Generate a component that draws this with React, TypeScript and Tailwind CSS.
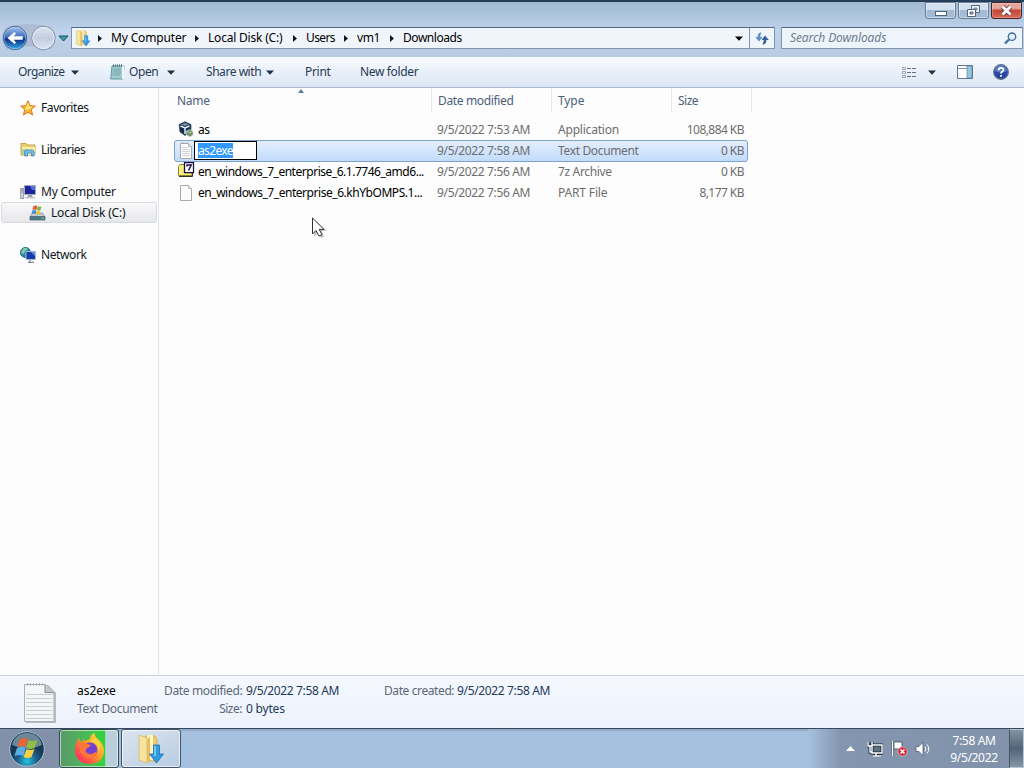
import React from "react";

const Down = ({ className = "text-[#1c2f45]" }: { className?: string }) => (
  <svg width="8" height="5" viewBox="0 0 8 5" className={"shrink-0 " + className}>
    <path d="M0 0.5H8L4 4.7Z" fill="currentColor" />
  </svg>
);

const FolderDownload = ({ width, height }: { width: number; height: number }) => (
  <svg width={width} height={height} viewBox="0 0 28 32" className="shrink-0">
    <path d="M8 3h10l2 3v22H8z" fill="#e8cb73" stroke="#cba548" strokeWidth=".7" />
    <path d="M10 2h6v25h-6z" fill="#fff3bf" />
    <path d="M2 2l8 3v25l-8-3z" fill="#f5e3a0" stroke="#d4b45f" strokeWidth=".7" />
    <path d="M10 6l3-2v24l-3 2z" fill="#e3bf62" />
    <path d="M16.500 12h6v9h4l-7 9-7-9h4z" fill="#2e9be2" stroke="#1d6fae" strokeWidth=".8" />
    <path d="M18 13v10" stroke="#8bd4fb" strokeWidth="1.500" />
  </svg>
);

const NavButtons = () => (
  <svg width="71" height="32" viewBox="0 0 71 32" className="shrink-0">
    <defs>
      <linearGradient id="back" x2="0" y2="1">
        <stop offset="0" stopColor="#a9c8ef" />
        <stop offset=".45" stopColor="#3f6fc0" />
        <stop offset=".55" stopColor="#0d2c85" />
        <stop offset="1" stopColor="#35b2ee" />
      </linearGradient>
      <linearGradient id="forward" x2="0" y2="1">
        <stop offset="0" stopColor="#dbe4ef" />
        <stop offset=".5" stopColor="#c3cfdf" />
        <stop offset="1" stopColor="#dae5f1" />
      </linearGradient>
    </defs>
    <path d="M6 5Q29 -1 51 5Q60 16 51 27Q29 21 7 28Q-2 15 6 5" fill="#a5b5cc" opacity=".7" />
    <circle cx="15" cy="16" r="11.700" fill="url(#back)" stroke="#48658f" />
    <circle cx="15" cy="16" r="10.800" fill="none" stroke="#c4dcf5" strokeWidth=".7" opacity=".7" />
    <path d="M7.500 16l7-6 1.500 1.500-2.300 2.800h9v3.400h-9l2.300 2.800-1.500 1.500z" fill="#fff" />
    <circle cx="43.500" cy="16" r="11.700" fill="url(#forward)" stroke="#7e8da5" />
    <circle cx="43.500" cy="16" r="10.700" fill="none" stroke="#edf3f9" strokeWidth=".8" />
    <path d="M36 16h14m-4-4 4 4-4 4" fill="none" stroke="#bac7d8" opacity=".7" />
    <path d="M59 14h9l-4.500 5z" fill="#3b9fae" stroke="#174d70" />
  </svg>
);

const Star = () => (
  <svg width="16" height="16" viewBox="0 0 16 16">
    <path d="M8 .7l2.100 4.800 5.200.6-3.900 3.500 1.100 5.500L8 12.300l-4.500 2.800 1.100-5.500L.7 6.100l5.200-.6z" fill="#f9b532" stroke="#d67a28" />
    <path d="M8 2.500l1.500 4 3.300.3-2.800 2L8 10 5 9.500z" fill="#ffe36d" />
  </svg>
);
const Libraries = () => (
  <svg width="16" height="16" viewBox="0 0 16 16">
    <path d="M1 3V1.500h5l1 1.500h8v10H1z" fill="#ecd070" stroke="#c3a54b" />
    <path d="M2 5h13v8H2z" fill="#f8edaa" />
    <path d="M2 7h6v6H2z" fill="#a8d8a1" />
    <path d="M4.500 14V10q0-2 2-2h5.500q2 0 2 2v4h-2.500v-3h-4v3z" fill="#74b9e8" stroke="#4085bd" strokeWidth=".8" />
  </svg>
);
const Computer = () => (
  <svg width="16" height="16" viewBox="0 0 16 16">
    <path d="M.7 4.500h3v10h-3z" fill="#d7dadd" stroke="#777f89" strokeWidth=".8" />
    <path d="M1.500 6h1.500m-1.500 2h1.500" stroke="#6a7580" />
    <path d="M4.500 1.500h11v9h-11z" fill="#1c249d" stroke="#a5abb7" />
    <path d="M10 2h5v4h-3z" fill="#5870de" />
    <path d="M8 11h4l1 2.500H7z" fill="#9ca3ad" />
    <path d="M5 13.700h10" stroke="#c0c4cc" strokeWidth="1.500" />
  </svg>
);
const Disk = () => (
  <svg width="17" height="16" viewBox="0 0 17 16">
    <path d="M3.500 8h10l2.500 4H1z" fill="#c3ccd2" stroke="#798a93" strokeWidth=".7" />
    <path d="M1 11.500h15V15H1z" fill="#527989" stroke="#405e6e" strokeWidth=".7" />
    <path d="M4.500 1Q7 -.2 8.500 1L7.500 5Q5.500 4 3.500 5z" fill="#e85b32" />
    <path d="M9 1.200Q10.800 2.200 12.500 1.200L11.500 5Q9.500 6 8 5z" fill="#70b442" />
    <path d="M3.300 5.500Q5.500 4.500 7.500 5.700L6.500 9Q4.500 8 2.500 9z" fill="#4192d4" />
    <path d="M8 5.700Q9.800 6.700 11.500 5.700L10.500 9.500Q8.500 10 7 9z" fill="#f3c52b" />
    <path d="M12.500 13.300h2" stroke="#87dc83" />
  </svg>
);
const Network = () => (
  <svg width="16" height="16" viewBox="0 0 16 16">
    <circle cx="5.500" cy="5.500" r="5" fill="#278bae" stroke="#1d6787" />
    <path d="M2 3Q5-1 8 2L5 4 4 7 1 6z" fill="#81cca5" />
    <path d="M6 4.500h9.500v8H6z" fill="#163bac" stroke="#abb7c8" />
    <path d="M11 5h4v4z" fill="#6091e3" />
    <path d="M10 13v2m-2 .3h6" stroke="#5c6b82" />
  </svg>
);

const Page = ({ lined = false }: { lined?: boolean }) => (
  <svg width="16" height="18" viewBox="0 0 16 18">
    <path d="M2.500 1.500h8l3 3v12h-11z" fill="#fdfdfd" stroke="#aaa" />
    <path d="M10.500 1.500v3h3" fill="#e7e7e7" stroke="#aaa" strokeWidth=".8" />
    {lined && <path d="M4 5.500h6M4 7.500h8M4 9.500h8M4 11.500h8M4 13.500h8" stroke="#bdccd8" strokeWidth=".8" />}
    {lined && <path d="M3 1h8" stroke="#8c969f" strokeDasharray="1 1" />}
  </svg>
);
const VBox = () => (
  <svg width="16" height="17" viewBox="0 0 16 17">
    <path d="M1 3.500L7 .7l6 2.800v7L7 14.500 2 11z" fill="#132f4c" stroke="#314e68" strokeWidth=".7" />
    <path d="M3 3.500L7 2l4 1.500L7 5z" fill="#7799b3" />
    <path d="M2.500 5l4.500 2 4.500-2M7 7v6" fill="none" stroke="#e5edf3" strokeWidth="1.500" />
    <path d="M8.500 10l3-1.500L15 10v4l-3 2-3.500-2z" fill="#74936d" stroke="#dce6dc" strokeWidth=".6" />
    <path d="M9 10.300l3 1.500 3-1.500" fill="none" stroke="#c4d0be" strokeWidth=".8" />
  </svg>
);
const Archive = () => (
  <svg width="17" height="17" viewBox="0 0 17 17" className="-mt-[2px]">
    <path d="M.5 13.500v-9L2 2.500h4l1.500 2H14v9z" fill="#f5ee7b" stroke="#85823c" />
    <path d="M1 14.500h13.500V9" fill="none" stroke="#34331f" />
    <path d="M6.500 .7h9v10h-9z" fill="#fff" stroke="#1c1040" strokeWidth="1.300" />
    <path d="M8.500 3h4.700L10.500 8.500M9 2.500v2" fill="none" stroke="#210f58" strokeWidth="1.500" />
  </svg>
);

const crumbs = [
  { t: "My Computer", w: "w-[97px]", s: "tracking-[-0.15px]", arrow: true },
  { t: "Local Disk (C:)", w: "w-[98px]", s: "tracking-[-0.2px]", arrow: true },
  { t: "Users", w: "w-[51px]", s: "tracking-[-0.6px]", arrow: true },
  { t: "vm1", w: "w-[46px]", s: "tracking-[-0.4px]", arrow: true },
  { t: "Downloads", w: "w-[70px]", s: "tracking-[-0.45px]", arrow: false },
];
const Right = () => <svg width="4" height="7" viewBox="0 0 4 7"><path d="M0 0v7l4-3.500z" fill="#101820" /></svg>;

const files = [
  { name: "as", date: "9/5/2022 7:53 AM", type: "Application", size: "108,884 KB", icon: <VBox />, nameTracking: "tracking-[-0.4px]", typeTracking: "tracking-[-0.2px]" },
  { name: "as2exe", date: "9/5/2022 7:58 AM", type: "Text Document", size: "0 KB", icon: <Page lined />, selected: true, nameTracking: "", typeTracking: "tracking-[-0.35px]" },
  { name: "en_windows_7_enterprise_6.1.7746_amd6...", date: "9/5/2022 7:56 AM", type: "7z Archive", size: "0 KB", icon: <Archive />, nameTracking: "tracking-[-0.475px]", typeTracking: "tracking-[-0.35px]" },
  { name: "en_windows_7_enterprise_6.khYbOMPS.1...", date: "9/5/2022 7:56 AM", type: "PART File", size: "8,177 KB", icon: <Page />, nameTracking: "tracking-[-0.455px]", typeTracking: "tracking-[-0.15px]" },
];

const Caption = () => (
  <div className="flex h-[25px] justify-end gap-[2px] border-t-2 border-[#263e58] pr-[2px]">
    <div className="flex h-[17px] w-[31px] items-center justify-center rounded-b-[3px] border border-[#657d9b] bg-linear-to-b from-[#d1dfef] from-45% to-[#a5bbd3] to-50% shadow-[inset_0_0_0_1px_rgba(255,255,255,0.45)]">
      <svg width="12" height="5" className="mt-[5px]"><rect x=".5" y=".5" width="11" height="4" fill="#fff" stroke="#52647c" /></svg>
    </div>
    <div className="flex h-[17px] w-[31px] items-center justify-center rounded-b-[3px] border border-[#657d9b] bg-linear-to-b from-[#d1dfef] from-45% to-[#a5bbd3] to-50% shadow-[inset_0_0_0_1px_rgba(255,255,255,0.45)]">
      <svg width="13" height="12" viewBox="0 0 13 12"><path d="M4.500.5h8v7h-8z" fill="#edf3fa" stroke="#52647c" /><path d="M7 3h3v2H7z" fill="#aabdd1" stroke="#52647c" strokeWidth=".7" /><path d="M.5 4.500h8v7h-8z" fill="#fff" stroke="#52647c" /><path d="M3 7h3v2H3z" fill="#aabdd1" stroke="#52647c" /></svg>
    </div>
    <div className="flex h-[17px] w-[31px] items-center justify-center rounded-b-[3px] border border-[#4c1e25] bg-linear-to-b from-[#e5a69b] from-35% via-[#c64637] via-50% to-[#d36a56] shadow-[inset_0_0_0_1px_rgba(255,255,255,0.25)]">
      <svg width="13" height="11" viewBox="0 0 13 11"><path d="M2.500 1.500l8 8M10.500 1.500l-8 8" stroke="#703f46" strokeWidth="4.600" /><path d="M2.500 1.500l8 8M10.500 1.500l-8 8" stroke="#fff" strokeWidth="2.900" /></svg>
    </div>
  </div>
);

const AddressBar = () => (
  <div className="flex h-[32px]">
    <div className="-mt-[3px]"><NavButtons /></div>
    <div className="mt-[2px] flex h-[22px] w-[704px] items-center border border-[#8094ae] border-t-[#526983] bg-[#f0f5fc] text-black">
      <div className="flex w-[25px] pl-[3px]"><FolderDownload width={16} height={18} /></div>
      <div className="w-[14px] pl-px"><Right /></div>
      {crumbs.map((c) => (
        <div key={c.t} className={"flex shrink-0 items-center " + c.w + " " + c.s}>
          <span className="flex-1 whitespace-nowrap">{c.t}</span>
          {c.arrow && <span className="mr-[9px] flex"><Right /></span>}
        </div>
      ))}
      <div className="ml-auto mr-[6px]"><Down className="text-black" /></div>
      <div className="flex h-full w-[25px] items-center justify-center border-l border-[#8094ae]">
        <svg width="14" height="13" viewBox="0 0 14 13"><path d="M5.500.5Q2.700 1 2.700 4.500V5H.3L4 9.500 7.500 5H5.200Q5.200 2.500 6.500.5z" fill="#5b91c6" /><path d="M8.500 12.500Q11.300 12 11.300 8.500V8h2.500L10 3.500 6.500 8h2.300Q8.800 10.500 7.500 12.500z" fill="#375f94" /></svg>
      </div>
    </div>
    <div className="mt-[2px] ml-[6px] flex h-[22px] w-[242px] items-center justify-between border border-[#8094ae] border-t-[#526983] bg-[#edf4fb] pl-[8px] pr-[5px] text-[#6f7d8e] italic">
      <span className="tracking-[-0.1px]">Search Downloads</span>
      <svg width="13" height="13" viewBox="0 0 13 13"><circle cx="8" cy="4.700" r="3.700" fill="#e2f1fc" stroke="#476d9b" strokeWidth="1.400" /><path d="M5 7.500L1 11.500" stroke="#476d9b" strokeWidth="2.300" /></svg>
    </div>
  </div>
);

const Toolbar = () => (
  <div className="flex h-[31px] items-center border-t border-b border-t-[#f5faff] border-b-[#a9b8cd] bg-linear-to-b from-[#f9fbfe] via-[#e9f0fa] via-50% to-[#dce6f4] pb-px pl-[18px] text-[#263a53]">
    <div className="flex w-[92px] items-center"><span className="w-[53px] tracking-[-0.6px]">Organize</span><Down /></div>
    <div className="flex w-[96px] items-center">
      <svg width="15" height="16" viewBox="0 0 15 16" className="mr-[4px]"><path d="M2 2h12l-1 13H.7z" fill="#9fcad0" stroke="#6498a5" /><path d="M12 2h2v13h-2z" fill="#eef7f7" /><path d="M3 5h8M3 7h8M2.500 9H11M2.300 11H10" stroke="#77a9ae" /><path d="M3 1.500h10" stroke="#42656d" strokeWidth="2" strokeDasharray="1 1" /></svg>
      <span className="w-[38px] tracking-[-0.4px]">Open</span><Down />
    </div>
    <div className="flex w-[99px] items-center"><span className="w-[60px] whitespace-nowrap tracking-[-0.45px]">Share with</span><Down /></div>
    <span className="w-[55px] tracking-[-0.3px]">Print</span><span className="tracking-[-0.35px]">New folder</span>
    <svg width="15" height="13" viewBox="0 0 15 13" className="ml-auto"><path d="M.5 1.500h3v2h-3zM.5 5.500h3v2h-3zM.5 9.500h3v2h-3z" fill="#fff" stroke="#778597" strokeWidth=".7" /><path d="M5 2.500h10M5 6.500h10M5 10.500h10" stroke="#627187" strokeDasharray="4 1" /></svg>
    <div className="ml-[11px]"><Down /></div>
    <svg width="16" height="14" viewBox="0 0 16 14" className="ml-[21px]"><path d="M.5.5h15v13H.5z" fill="#fff" stroke="#5b7697" /><path d="M1 3.500h9" stroke="#8096b2" /><path d="M10 1h5v12h-5z" fill="#91c8dd" stroke="#5b7697" strokeWidth=".6" /></svg>
    <svg width="16" height="16" viewBox="0 0 16 16" className="mr-[15px] ml-[20px]"><circle cx="8" cy="8" r="7.300" fill="#2546a5" stroke="#63728c" strokeWidth="1.300" /><path d="M2 7a6 6 0 0 1 12 0Q8 10 2 7" fill="#6f91da" opacity=".7" /><path d="M5.700 6.200Q5.700 3.800 8 3.800q2.400 0 2.400 2Q10.400 7 9 7.800q-1 .7-1 1.800M8 11v1.800" fill="none" stroke="#fff" strokeWidth="1.800" /></svg>
  </div>
);

const Sidebar = () => (
  <aside className="flex w-[159px] flex-col border-r border-[#dce5f0] pt-[9px] text-[#101722]">
    <div className="flex h-[21px] items-center gap-[5px] pl-[20px]"><Star /><span className="tracking-[-0.4px]">Favorites</span></div>
    <div className="mt-[21px] flex h-[21px] items-center gap-[5px] pl-[20px]"><Libraries /><span className="tracking-[-0.5px]">Libraries</span></div>
    <div className="mt-[21px] flex h-[21px] items-center gap-[5px] pl-[20px]"><Computer /><span className="tracking-[-0.2px]">My Computer</span></div>
    <div className="mr-px ml-px flex h-[21px] items-center gap-[5px] rounded-[3px] border border-[#d7d9dd] bg-linear-to-b from-[#f9f9fa] to-[#e6e7ea] pl-[27px]"><Disk /><span className="tracking-[-0.2px]">Local Disk (C:)</span></div>
    <div className="mt-[21px] flex h-[21px] items-center gap-[5px] pl-[20px]"><Network /><span className="tracking-[-0.4px]">Network</span></div>
  </aside>
);

const FileList = () => (
  <main className="relative flex-1 pl-[15px]">
    <div className="flex h-[31px] w-[578px] text-[#4c607a]">
      <div className="relative h-[24px] w-[258px] border-r border-[#e4e9ef] pt-[5px] pl-[3px] tracking-[-0.3px]">Name<svg className="absolute top-[1px] left-[124px]" width="6" height="4"><path d="M0 4L3 0l3 4z" fill="#637b96" /></svg></div>
      <div className="h-[24px] w-[120px] border-r border-[#e4e9ef] pt-[5px] pl-[6px] tracking-[-0.35px]">Date modified</div>
      <div className="h-[24px] w-[120px] border-r border-[#e4e9ef] pt-[5px] pl-[6px] tracking-[-0.1px]">Type</div>
      <div className="h-[24px] w-[80px] border-r border-[#e4e9ef] pt-[5px] pl-[6px] tracking-[-0.5px]">Size</div>
    </div>
    {files.map((f) => (
      <div key={f.name} className={"flex w-[574px] items-center rounded-[3px] border pl-[3px] text-[#6d6d6d] " + (f.selected ? "-mb-px h-[22px] border-[#7da2ce] bg-linear-to-b from-[#e4effd] to-[#c2dbfc]" : "h-[21px] border-transparent")}>
        <div className="flex w-[17px]">{f.icon}</div>
        {f.selected ? (
          <div className="-mt-px mr-[180px] -ml-px flex h-[19px] w-[63px] items-center border border-black bg-white pl-[3px] text-white"><span className="bg-[#3399ff] leading-[15px] tracking-[-0.65px]">as2exe</span></div>
        ) : (
          <div className={"w-[242px] pl-[3px] whitespace-nowrap text-black " + f.nameTracking}>{f.name}</div>
        )}
        <span className="w-[121px] whitespace-nowrap tracking-[-0.35px]">{f.date}</span>
        <span className={"w-[109px] whitespace-nowrap " + f.typeTracking}>{f.type}</span>
        <span className="flex-1 pr-[3px] text-right whitespace-nowrap tracking-[-0.55px]">{f.size}</span>
      </div>
    ))}
    <svg className="absolute top-[129px] left-[152px]" width="17" height="23" viewBox="0 0 17 23"><path d="M3 3v17l4-4 3 5 3-1-2-6h5z" fill="#555" opacity=".35" /><path d="M1.500 1v16l3.500-3.500L8 19l3-1.300-2.800-5.300H13z" fill="#fff" stroke="#303030" /></svg>
  </main>
);

const Details = () => (
  <footer className="flex h-[53px] border-t border-[#cbd3df] bg-linear-to-b from-[#f5f8fe] to-[#edf2fc] pt-[6px] leading-[18px]">
    <svg width="34" height="42" viewBox="0 0 34 42" className="ml-[23px] shrink-0">
      <path d="M3 3h22l8 8v30H3z" fill="#8e969d" opacity=".6" />
      <path d="M1.500 2.500H22l9 8V39.500h-29.500z" fill="#f4f5f6" stroke="#a9afb5" />
      <path d="M22 2.500v8h9" fill="#c7cbd0" stroke="#889097" />
      <path d="M3 12.500h27M3 16.500h27M3 20.500h27M3 24.500h27M3 28.500h27M3 32.500h27M3 36.500h27" stroke="#c8d0d7" />
      <path d="M4 2.500h17" stroke="#9097a0" strokeWidth="2" strokeDasharray="1 2" />
    </svg>
    <div className="ml-[20px] w-[87px] whitespace-nowrap"><div className="text-black">as2exe</div><div className="text-[#5a6779] tracking-[-0.35px]">Text Document</div></div>
    <div className="w-[78px] whitespace-nowrap text-[#5a6779]"><div className="tracking-[-0.35px]">Date modified:</div><div className="text-right tracking-[-0.5px]">Size:</div></div>
    <div className="w-[142px] pl-[4px] whitespace-nowrap text-[#1e395b]"><div className="tracking-[-0.35px]">9/5/2022 7:58 AM</div><div className="tracking-[-0.2px]">0 bytes</div></div>
    <div className="w-[73px] whitespace-nowrap text-[#5a6779] tracking-[-0.4px]">Date created:</div><div className="text-[#1e395b] tracking-[-0.35px]">9/5/2022 7:58 AM</div>
  </footer>
);

const Start = () => (
  <svg width="38" height="38" viewBox="0 0 38 38">
    <defs><radialGradient id="orb" cy=".85"><stop stopColor="#24c7df" /><stop offset=".55" stopColor="#1e608c" /><stop offset="1" stopColor="#163850" /></radialGradient></defs>
    <circle cx="19" cy="19" r="17.300" fill="url(#orb)" stroke="#a2c2d2" />
    <path d="M4 15Q7 3 19 3t15 12Q19 22 4 15" fill="#bfd5df" opacity=".5" />
    <path d="M12 9.500Q16 7 19.500 9l-2 8q-4-2-8 0z" fill="#ed6332" /><path d="M20.500 10q4 2 9 0l-3 8q-4 2-8 0z" fill="#91bd43" />
    <path d="M9 18q5-2 8.500 0l-2 8q-4-2-9 0z" fill="#57afe4" /><path d="M18.500 19q4 2 8 0l-3 8q-4 2-8 0z" fill="#f7cf45" />
  </svg>
);
const Firefox = () => (
  <svg width="34" height="36" viewBox="0 0 34 36">
    <defs><linearGradient id="fox" x1="1" x2="0" y2="1"><stop stopColor="#fff33d" /><stop offset=".45" stopColor="#ff9b29" /><stop offset=".8" stopColor="#ff4058" /><stop offset="1" stopColor="#ef2276" /></linearGradient></defs>
    <path d="M18 8Q18 4 22 2q1 4 5 7 5 5 5 11Q31 33 17 33 4 32 3 20q0-8 4-13l2 4 3-2q1 2 6-1z" fill="url(#fox)" />
    <circle cx="18" cy="19" r="7.500" fill="#7141d5" />
    <path d="M9 14q3-3 7-1 2 0 3 2l-4 2q-3 3 0 5 5 3 10-2-1 8-9 7-8-2-8-9z" fill="#ff7738" />
    <path d="M18 11q9-1 8 9 5-7-3-13-2 0-5 4" fill="#ffd342" />
  </svg>
);

const Taskbar = () => (
  <div className="flex h-[40px] border-t border-[#34495f] bg-[#a6c1df] text-white shadow-[inset_0_2px_2px_rgba(110,125,150,0.35)]">
    <div className="flex w-[59px] items-center justify-center bg-[#8291a9] pr-[5px]"><Start /></div>
    <div className="flex h-[39px] w-[60px] items-center justify-center overflow-hidden rounded-[3px] border border-[#314b4a] bg-linear-to-r from-[#599868] via-[#2fd43c] via-77% to-[#b9cfdb] to-79% shadow-[inset_0_0_0_1px_rgba(255,255,255,0.55)]"><Firefox /></div>
    <div className="ml-[2px] flex h-[39px] w-[60px] items-center justify-center rounded-[3px] border border-[#42556b] bg-linear-to-br from-[#dce5ef] to-[#b8cce2] shadow-[inset_0_0_0_1px_rgba(255,255,255,0.65)]"><FolderDownload width={28} height={32} /></div>
    <div className="ml-auto flex h-full w-[216px] items-center bg-linear-to-r from-[#a6c1df] via-[#8496af] via-15% to-[#8192aa]">
      <svg width="9" height="5" className="ml-[38px]"><path d="M0 5L4.500 0 9 5z" fill="#fff" /></svg>
      <svg width="16" height="16" viewBox="0 0 16 16" className="ml-[12px]"><path d="M5 4h10v8H5zM9 12v3m-3 0h8M1 1v4h4V1M3 5v6h2" fill="#607084" stroke="#17283c" strokeWidth="3" /><path d="M5 4h10v8H5zM9 12v3m-3 0h8M1 1v4h4V1M3 5v6h2" fill="none" stroke="#fff" strokeWidth="1.400" /></svg>
      <svg width="17" height="17" viewBox="0 0 17 17" className="ml-[8px]"><path d="M3 2h8v7H3z" fill="#fff" stroke="#394d65" strokeWidth=".8" /><path d="M1.500 1v15" stroke="#394d65" strokeWidth="3" /><path d="M1.500 1v15" stroke="#fff" strokeWidth="1.500" /><circle cx="11.500" cy="11.500" r="4.600" fill="#d62731" stroke="#eebac3" strokeWidth=".7" /><path d="M9.500 9.500l4 4m0-4l-4 4" stroke="#fff" strokeWidth="1.600" /></svg>
      <svg width="16" height="16" viewBox="0 0 16 16" className="ml-[7px]"><path d="M1 5.500h3L8 1v14l-4-4.500H1z" fill="#fff" stroke="#4b5c72" strokeWidth=".8" /><path d="M10 5.500q2 2.500 0 5M12 3.500q3.500 4.500 0 9" fill="none" stroke="#fff" /></svg>
      <div className="ml-[10px] flex w-[66px] flex-col text-center leading-[17px] tracking-[-0.35px]"><span>7:58 AM</span><span>9/5/2022</span></div>
      <div className="ml-auto h-full w-[15px] border border-[#b8c6d3] border-l-[#43566c] bg-linear-to-b from-[#8493a4] via-[#526477] via-50% to-[#8796a9]" />
    </div>
  </div>
);

export default function App() {
  return (
    <div className="flex h-[768px] w-[1024px] flex-col overflow-hidden bg-linear-to-b from-[#9eb7d1] via-[#bfd3eb] via-4% to-[#b6c9df] to-8% font-['Noto_Sans',sans-serif] text-[12px] leading-[16px]">
      <Caption />
      <AddressBar />
      <Toolbar />
      <div className="flex h-[587px] bg-[#fdfdfd]"><Sidebar /><FileList /></div>
      <Details />
      <Taskbar />
    </div>
  );
}
